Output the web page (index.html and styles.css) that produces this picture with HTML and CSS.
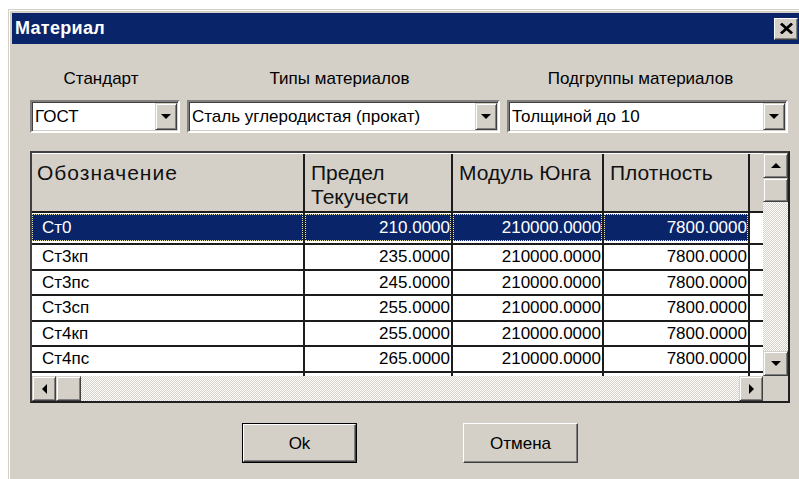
FILE: index.html
```html
<!DOCTYPE html>
<html lang="ru">
<head>
<meta charset="utf-8">
<title>Материал</title>
<link rel="stylesheet" href="styles.css">
</head>
<body>
<div class="window">
  <div class="titlebar">
    <span class="title">Материал</span>
    <span class="close" role="button" aria-label="Закрыть">
      <svg width="13" height="11" viewBox="0 0 13 11"><path d="M2 1.5 L11 9.5 M11 1.5 L2 9.5" stroke="#000" stroke-width="2.8" stroke-linecap="square" fill="none"/></svg>
    </span>
  </div>

  <div class="content">
    <div class="filters">
      <div class="field">
        <div class="label">Стандарт</div>
        <div class="combo"><span class="combo-text">ГОСТ</span><span class="drop"><i class="tri tri-down"></i></span></div>
      </div>
      <div class="field">
        <div class="label">Типы материалов</div>
        <div class="combo"><span class="combo-text">Сталь углеродистая (прокат)</span><span class="drop"><i class="tri tri-down"></i></span></div>
      </div>
      <div class="field">
        <div class="label label-wide">Подгруппы материалов</div>
        <div class="combo"><span class="combo-text">Толщиной до 10</span><span class="drop"><i class="tri tri-down"></i></span></div>
      </div>
    </div>

    <div class="grid">
      <div class="grid-main">
        <div class="grid-body">
          <div class="row head">
            <div class="cell">Обозначение</div>
            <div class="cell">Предел<br>Текучести</div>
            <div class="cell">Модуль Юнга</div>
            <div class="cell">Плотность</div>
            <div class="cell filler"></div>
          </div>
          <div class="row selected">
            <div class="cell"><div class="hl">Ст0</div></div>
            <div class="cell num"><div class="hl">210.0000</div></div>
            <div class="cell num"><div class="hl">210000.0000</div></div>
            <div class="cell num"><div class="hl">7800.0000</div></div>
            <div class="cell filler"></div>
          </div>
          <div class="row">
            <div class="cell">Ст3кп</div>
            <div class="cell num">235.0000</div>
            <div class="cell num">210000.0000</div>
            <div class="cell num">7800.0000</div>
            <div class="cell filler"></div>
          </div>
          <div class="row">
            <div class="cell">Ст3пс</div>
            <div class="cell num">245.0000</div>
            <div class="cell num">210000.0000</div>
            <div class="cell num">7800.0000</div>
            <div class="cell filler"></div>
          </div>
          <div class="row">
            <div class="cell">Ст3сп</div>
            <div class="cell num">255.0000</div>
            <div class="cell num">210000.0000</div>
            <div class="cell num">7800.0000</div>
            <div class="cell filler"></div>
          </div>
          <div class="row">
            <div class="cell">Ст4кп</div>
            <div class="cell num">255.0000</div>
            <div class="cell num">210000.0000</div>
            <div class="cell num">7800.0000</div>
            <div class="cell filler"></div>
          </div>
          <div class="row">
            <div class="cell">Ст4пс</div>
            <div class="cell num">265.0000</div>
            <div class="cell num">210000.0000</div>
            <div class="cell num">7800.0000</div>
            <div class="cell filler"></div>
          </div>
          <!-- next row, scrolled below the visible area: only its column lines show -->
          <div class="row">
            <div class="cell"></div>
            <div class="cell num"></div>
            <div class="cell num"></div>
            <div class="cell num"></div>
            <div class="cell filler"></div>
          </div>
        </div>
        <div class="vscroll">
          <span class="sbtn"><i class="tri tri-up"></i></span>
          <span class="thumb"></span>
          <span class="track"></span>
          <span class="sbtn"><i class="tri tri-down"></i></span>
        </div>
      </div>
      <div class="hscroll-row">
        <div class="hscroll">
          <span class="sbtn hbtn"><i class="tri tri-left"></i></span>
          <span class="thumb hthumb"></span>
          <span class="track"></span>
          <span class="sbtn hbtn"><i class="tri tri-right"></i></span>
        </div>
        <div class="corner"></div>
      </div>
    </div>

    <div class="buttons">
      <span class="btn btn-default" role="button"><span class="btn-face">Ok</span></span>
      <span class="btn" role="button"><span class="btn-face">Отмена</span></span>
    </div>
  </div>
</div>
</body>
</html>
```

FILE: styles.css
```css
* { box-sizing: border-box; }

html, body {
  margin: 0;
  padding: 0;
  background: #fff;
  overflow: hidden;
}

body {
  width: 799px;
  height: 479px;
  font-family: "Liberation Sans", Arial, sans-serif;
  color: #000;
}

/* classic 3D window frame */
.window {
  margin: 9px 0 0 8px;
  width: 796px;
  height: 480px;
  background: #d4d0c8;
  border: 1px solid;
  border-color: #d4d0c8 #404040 #404040 #d4d0c8;
  box-shadow: inset 1px 1px #fff, inset -1px -1px #808080;
  padding: 3px;
}

.titlebar {
  height: 31px;
  background: #0a246a;
  display: flex;
  align-items: center;
  justify-content: space-between;
  padding: 0 2px 0 3px;
}

.title {
  color: #fff;
  font-weight: bold;
  font-size: 18px;
  letter-spacing: 0.3px;
}

.close {
  width: 24px;
  height: 22px;
  background: #d4d0c8;
  border: 1px solid;
  border-color: #fff #404040 #404040 #fff;
  box-shadow: inset -1px -1px #808080;
  display: flex;
  align-items: center;
  justify-content: center;
}

.content {
  padding: 0 10px 0 18px;
}

/* filter combos */
.filters {
  display: grid;
  grid-template-columns: 150px 313px 281px;
  column-gap: 7px;
  padding-top: 25px;
}

.label {
  height: 20px;
  line-height: 20px;
  font-size: 17px;
  text-align: center;
  padding-right: 8px;
  white-space: nowrap;
}

.label-wide { padding-right: 14px; }

.combo {
  margin-top: 11px;
  height: 33px;
  background: #fff;
  border: 2px solid;
  border-color: #808080 #fff #fff #808080;
  box-shadow: inset 1px 1px #404040, inset -1px -1px #d4d0c8;
  display: flex;
  align-items: center;
  padding: 1px 1px 1px 3px;
}

.combo-text {
  flex: 1;
  font-size: 17px;
  white-space: nowrap;
  overflow: hidden;
}

.drop {
  width: 22px;
  height: 27px;
  background: #d4d0c8;
  border: 1px solid;
  border-color: #d4d0c8 #404040 #404040 #d4d0c8;
  box-shadow: inset 1px 1px #fff, inset -1px -1px #808080;
  display: flex;
  align-items: center;
  justify-content: center;
}

/* small arrow glyphs */
.tri {
  display: block;
  width: 0;
  height: 0;
  border-style: solid;
}
.tri-down { border-width: 5px 5px 0 5px; border-color: #000 transparent transparent transparent; }
.tri-up { border-width: 0 5px 5px 5px; border-color: transparent transparent #000 transparent; }
.tri-left { border-width: 5px 5px 5px 0; border-color: transparent #000 transparent transparent; }
.tri-right { border-width: 5px 0 5px 5px; border-color: transparent transparent transparent #000; }

/* data grid */
.grid {
  margin-top: 18px;
  width: 760px;
  border: 2px solid;
  border-color: #404040 #202020 #202020 #404040;
  background: #fff;
}

.grid-main {
  display: flex;
  height: 223px;
}

.grid-body {
  flex: 1;
  overflow: hidden;
  background: #fff;
}

.row {
  display: grid;
  grid-template-columns: 273px 148px 151px 146px 1fr;
  height: 25.5px;
  border-bottom: 2px solid #1c1c1c;
  font-size: 17px;
}

.cell {
  border-right: 2px solid #1c1c1c;
  padding-left: 10px;
  line-height: 23.5px;
  white-space: nowrap;
  overflow: hidden;
}

.cell.num {
  text-align: right;
  padding-left: 0;
  padding-right: 1px;
}

.cell.filler {
  border-right: 0;
}

.row.head {
  height: 60px;
  background: #d4d0c8;
  font-size: 21px;
  border-top: 1px solid #fff;
}

.row.head .cell {
  padding: 7px 0 0 6px;
  line-height: 24px;
  color: #111;
}

.row.head .cell:first-child {
  padding-left: 5px;
  letter-spacing: 1px;
}

.row.selected {
  height: 32px;
}

.row.selected .cell {
  padding: 1px 0 0 0;
}

.hl {
  height: 27px;
  line-height: 27px;
  background: #0a246a;
  color: #fff;
  outline: 1px dotted #e6e2a8;
  outline-offset: -1px;
  padding-left: 10px;
}

.row.selected .num .hl {
  padding-left: 0;
  padding-right: 1px;
}

/* scrollbars */
.vscroll {
  width: 25px;
  display: flex;
  flex-direction: column;
}

.sbtn {
  flex: none;
  height: 25px;
  background: #d4d0c8;
  border: 1px solid;
  border-color: #d4d0c8 #404040 #404040 #d4d0c8;
  box-shadow: inset 1px 1px #fff, inset -1px -1px #808080;
  display: flex;
  align-items: center;
  justify-content: center;
}

.thumb {
  flex: none;
  height: 24px;
  background: #d4d0c8;
  border: 1px solid;
  border-color: #d4d0c8 #404040 #404040 #d4d0c8;
  box-shadow: inset 1px 1px #fff, inset -1px -1px #808080;
}

.track {
  flex: 1;
  background: repeating-conic-gradient(#fff 0 25%, #d4d0c8 0 50%) 0 0 / 2px 2px;
}

.hscroll-row {
  display: flex;
  height: 25px;
}

.hscroll {
  flex: 1;
  display: flex;
}

.hbtn { width: 24px; height: 25px; }
.hthumb { width: 25px; height: 25px; }

.corner {
  width: 25px;
  background: #d4d0c8;
}

/* dialog buttons */
.buttons {
  width: 760px;
  display: flex;
  justify-content: center;
  gap: 106px;
  margin-top: 20px;
}

.btn {
  width: 115px;
  height: 40px;
  background: #d4d0c8;
  border: 1px solid;
  border-color: #fff #404040 #404040 #fff;
  box-shadow: inset -1px -1px #808080;
  display: flex;
}

.btn-default {
  border: 1px solid #000;
  box-shadow: none;
}

.btn-default .btn-face {
  border: 1px solid;
  border-color: #fff #404040 #404040 #fff;
  box-shadow: inset -1px -1px #808080;
}

.btn-face {
  flex: 1;
  display: flex;
  align-items: center;
  justify-content: center;
  font-size: 17px;
  padding-top: 1px;
}
```
